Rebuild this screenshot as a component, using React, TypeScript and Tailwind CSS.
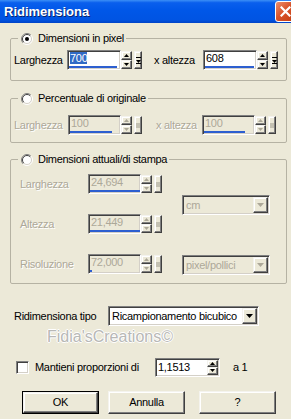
import React from "react";

const sunken =
  "border border-t-[#808080] border-l-[#808080] border-b-white border-r-white shadow-[inset_1px_1px_0_#404040,inset_-1px_-1px_0_#d4d0c8]";
const raised =
  "border border-t-[#f4f3ee] border-l-[#f4f3ee] border-b-[#404040] border-r-[#404040] shadow-[inset_-1px_-1px_0_#808080,inset_1px_1px_0_#fff]";
const disText = "text-[#aca899] [text-shadow:1px_1px_0_#fff]";

function Radio({ checked }: { checked?: boolean }) {
  return (
    <svg width="12" height="12" viewBox="0 0 12 12" className="shrink-0">
      <circle cx="6" cy="6" r="5" fill="#fff" />
      <path d="M9.9 2.1 A5.5 5.5 0 0 0 2.1 9.9" stroke="#808080" fill="none" />
      <path d="M9.9 2.1 A5.5 5.5 0 0 1 2.1 9.9" stroke="#fff" fill="none" />
      <path d="M9.2 2.8 A4.5 4.5 0 0 0 2.8 9.2" stroke="#404040" fill="none" />
      <path d="M9.2 2.8 A4.5 4.5 0 0 1 2.8 9.2" stroke="#d4d0c8" fill="none" />
      {checked && <circle cx="6" cy="6" r="2" fill="#000" />}
    </svg>
  );
}

function Tri({ up, color }: { up?: boolean; color: string }) {
  return (
    <svg width="5" height="3" viewBox="0 0 5 3">
      <path d={up ? "M2.5 0 L5 3 L0 3 Z" : "M0 0 L5 0 L2.5 3 Z"} fill={color} />
    </svg>
  );
}

function Spinner({ disabled, h = "h-[18px]" }: { disabled?: boolean; h?: string }) {
  const c = disabled ? "#aca899" : "#000";
  return (
    <div className={`flex flex-col w-[11px] ${h}`}>
      <div className={`flex-1 flex items-center justify-center bg-[#ece9d8] ${raised}`}>
        <Tri up color={c} />
      </div>
      <div className={`flex-1 flex items-center justify-center bg-[#ece9d8] ${raised}`}>
        <Tri color={c} />
      </div>
    </div>
  );
}

function Third({ disabled }: { disabled?: boolean }) {
  return (
    <div className={`ml-[2px] w-[8px] h-[18px] flex items-center justify-center bg-[#ece9d8] ${raised}`}>
      {disabled ? (
        <div className="w-[4px] h-[5px] bg-[#c4c1b2]" />
      ) : (
        <svg width="5" height="7" viewBox="0 0 5 7">
          <rect x="0" y="0" width="5" height="1" fill="#000" />
          <path d="M0 3 L5 3 L2.5 6 Z" fill="#000" />
          <rect x="0" y="6" width="5" height="1" fill="#000" />
        </svg>
      )}
    </div>
  );
}

function NumField({
  value,
  w,
  bar,
  disabled,
  selected,
}: {
  value: string;
  w: string;
  bar: string;
  disabled?: boolean;
  selected?: boolean;
}) {
  return (
    <div className="flex items-start">
      <div className={`${w} h-[20px] flex flex-col ${sunken} ${disabled ? "bg-[#ece9d8]" : "bg-white"}`}>
        <div className="pl-[2px] pt-[1px] leading-[13px] text-[11px] whitespace-nowrap">
          {selected ? (
            <span className="bg-[#316ac5] text-white">{value}</span>
          ) : (
            <span className={disabled ? "text-[#aca899]" : "text-black"}>{value}</span>
          )}
        </div>
        <div className="mt-auto mb-[1px] ml-[1px] h-[2px] flex">
          <div className={`${bar} h-full bg-[#2d5fd0]`} />
        </div>
      </div>
      <div className="flex items-start pt-[1px]">
        <Spinner disabled={disabled} />
        <Third disabled={disabled} />
      </div>
    </div>
  );
}

function Combo({ text, w, disabled }: { text: string; w: string; disabled?: boolean }) {
  return (
    <div className={`${w} h-[20px] flex items-center ${sunken} ${disabled ? "bg-[#ece9d8]" : "bg-white"}`}>
      <span
        className={`flex-1 min-w-0 overflow-hidden whitespace-nowrap pl-[3px] text-[11px] leading-[13px] ${
          disabled ? "text-[#aca899]" : "text-black"
        }`}
      >
        {text}
      </span>
      <div className={`shrink-0 w-[15px] h-[16px] mr-[1px] flex items-center justify-center bg-[#ece9d8] ${raised}`}>
        <svg width="7" height="4" viewBox="0 0 7 4">
          <path d="M0 0 L7 0 L3.5 4 Z" fill={disabled ? "#aca899" : "#000"} />
        </svg>
      </div>
    </div>
  );
}

function Legend({ text, checked }: { text: string; checked?: boolean }) {
  return (
    <legend className="ml-[7px] pl-[3px] pr-[2px]">
      <div className="flex items-center gap-[5px] h-[13px]">
        <Radio checked={checked} />
        <span className="text-[11px] leading-[13px] text-black whitespace-nowrap">{text}</span>
      </div>
    </legend>
  );
}

function Button({ label, def, cls }: { label: string; def?: boolean; cls: string }) {
  return (
    <div className={`${cls} w-[77px] h-[23px] ${def ? "border border-black" : ""}`}>
      <div className={`w-full h-full flex items-center justify-center bg-[#ece9d8] ${raised}`}>
        <span className="text-[11px] text-black leading-[13px]">{label}</span>
      </div>
    </div>
  );
}

export default function App() {
  return (
    <div className="w-[291px] h-[419px] overflow-hidden bg-[#ece9d8] font-['Liberation_Sans',Arial,sans-serif] text-[11px] text-black">
      {/* Title bar */}
      <div className="h-[23px] flex items-center bg-[linear-gradient(to_bottom,#3c8ff6_0%,#0a5fed_12%,#0057e8_45%,#0054e3_85%,#0043c6_100%)]">
        <span className="ml-[4px] flex-1 text-white font-bold text-[13px] leading-[16px] [text-shadow:1px_1px_0_#0a246a]">
          Ridimensiona
        </span>
        <div className="mr-[-5px] w-[21px] h-[21px] rounded-[3px] border border-white flex items-center justify-center bg-[linear-gradient(135deg,#ec8f6f_0%,#d9542c_45%,#c23c10_100%)]">
          <svg width="11" height="11" viewBox="0 0 11 11">
            <path d="M1.5 1.5 L9.5 9.5 M9.5 1.5 L1.5 9.5" stroke="#fff" strokeWidth="2.2" strokeLinecap="square" />
          </svg>
        </div>
      </div>

      <div className="tracking-[-0.3px]">
        {/* Group 1 */}
        <fieldset className="mt-[9px] ml-[10px] w-[277px] border border-[#b5b2a3] rounded-[2px] pt-[5px] pb-[10px]">
          <Legend text="Dimensioni in pixel" checked />
          <div className="flex items-center pl-[3px]">
            <span className="w-[53px] whitespace-nowrap">Larghezza</span>
            <NumField value="700" w="w-[54px]" bar="w-[48px]" selected />
            <span className="ml-[12px] w-[49px] whitespace-nowrap">x altezza</span>
            <NumField value="608" w="w-[54px]" bar="w-[49px]" />
          </div>
        </fieldset>

        {/* Group 2 */}
        <fieldset className="mt-[11px] ml-[10px] w-[277px] border border-[#b5b2a3] rounded-[2px] pt-[10px] pb-[7px]">
          <Legend text="Percentuale di originale" />
          <div className="flex items-center pl-[3px]">
            <span className={`w-[54px] whitespace-nowrap ${disText}`}>Larghezza</span>
            <NumField value="100" w="w-[53px]" bar="w-[42px]" disabled />
            <span className={`ml-[14px] w-[46px] whitespace-nowrap ${disText}`}>x altezza</span>
            <NumField value="100" w="w-[53px]" bar="w-[41px]" disabled />
          </div>
        </fieldset>

        {/* Group 3 */}
        <fieldset className="mt-[10px] ml-[10px] w-[277px] border border-[#b5b2a3] rounded-[2px] pt-[8px] pb-[8px]">
          <Legend text="Dimensioni attuali/di stampa" />
          <div className="flex pl-[9px]">
            <div className="flex flex-col gap-[20px]">
              <div className="flex items-center">
                <span className={`w-[68px] ${disText}`}>Larghezza</span>
                <NumField value="24,694" w="w-[53px]" bar="w-[51px]" disabled />
              </div>
              <div className="flex items-center">
                <span className={`w-[68px] ${disText}`}>Altezza</span>
                <NumField value="21,449" w="w-[53px]" bar="w-[51px]" disabled />
              </div>
              <div className="flex items-center">
                <span className={`w-[68px] ${disText}`}>Risoluzione</span>
                <NumField value="72,000" w="w-[53px]" bar="w-[2px]" disabled />
              </div>
            </div>
            <div className="ml-[20px] flex flex-col">
              <div className="mt-[21px]">
                <Combo text="cm" w="w-[88px]" disabled />
              </div>
              <div className="mt-[40px]">
                <Combo text="pixel/pollici" w="w-[88px]" disabled />
              </div>
            </div>
          </div>
        </fieldset>

        {/* Ridimensiona tipo */}
        <div className="mt-[22px] ml-[14px] flex items-center">
          <span className="w-[94px] whitespace-nowrap">Ridimensiona tipo</span>
          <Combo text="Ricampionamento bicubico" w="w-[151px]" />
        </div>

        {/* Watermark */}
        <div className="mt-[2px] ml-[47px] h-[18px] whitespace-nowrap tracking-normal text-[16px] leading-[18px] text-[#b8b8b6] [text-shadow:1px_0_0_#fff,-1px_0_0_#fff,0_1px_0_#fff,0_-1px_0_#fff]">
          Fidia'sCreations©
        </div>

        {/* Mantieni proporzioni */}
        <div className="mt-[12px] ml-[16px] flex items-center h-[18px]">
          <div className={`shrink-0 w-[13px] h-[13px] bg-white ${sunken}`} />
          <span className="ml-[6px] w-[120px] whitespace-nowrap">Mantieni proporzioni di</span>
          <div className={`w-[65px] h-[19px] flex items-center bg-white ${sunken}`}>
            <span className="flex-1 pl-[2px] leading-[13px]">1,1513</span>
            <Spinner h="h-[15px]" />
            <div className="w-[1px]" />
          </div>
          <span className="ml-[13px] whitespace-nowrap">a 1</span>
        </div>

        {/* Buttons */}
        <div className="mt-[15px] flex">
          <Button label="OK" def cls="ml-[22px]" />
          <Button label="Annulla" cls="ml-[9px]" />
          <Button label="?" cls="ml-[14px]" />
        </div>
      </div>
    </div>
  );
}
